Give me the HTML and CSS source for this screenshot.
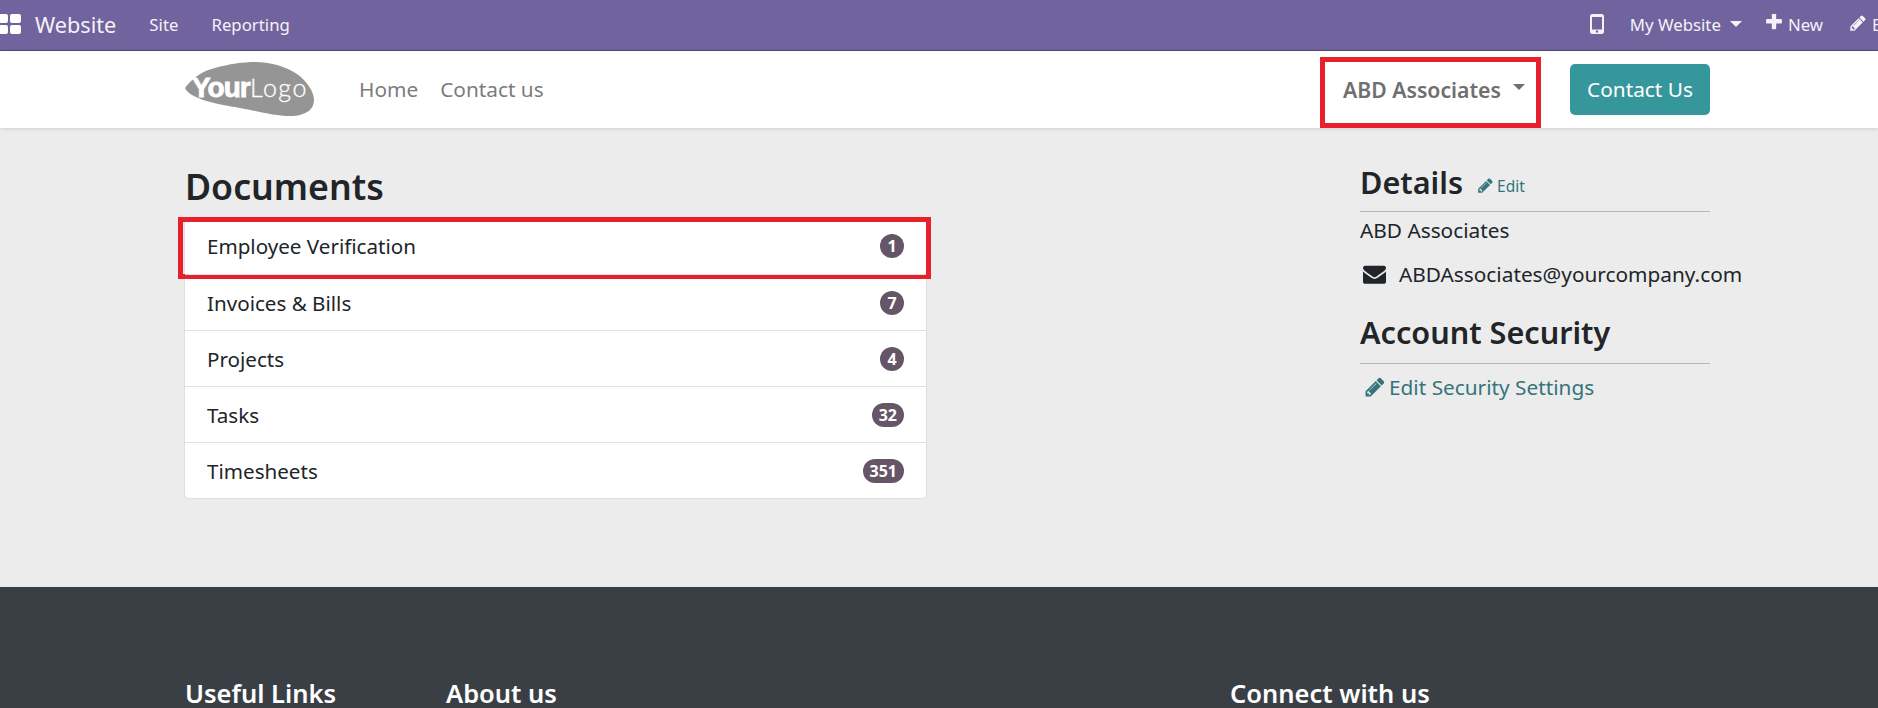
FILE: index.html
```html
<!DOCTYPE html>
<html lang="en">
<head>
    <meta charset="UTF-8">
    <title>Documents</title>
    <link rel="stylesheet" href="styles.css">
</head>
<body>
    <svg class="icon-defs" width="0" height="0">
        <symbol id="pencil" viewBox="0 0 1792 1792"><path d="M491 1536l91-91-235-235-91 91v107h128v128h107zm523-928q0-22-22-22-10 0-17 7l-542 542q-7 7-7 17 0 22 22 22 10 0 17-7l542-542q7-7 7-17zm-54-192l416 416-832 832h-416v-416zm683 96q0 53-37 90l-166 166-416-416 166-165q36-38 90-38 53 0 91 38l235 234q37 39 37 91z"/></symbol>
    </svg>

    <div class="top-bar">
        <div class="top-left">
            <svg class="apps-icon" viewBox="0 0 21 20"><rect x="-3" y="0" width="11" height="9" rx="2"/><rect x="10" y="0" width="11" height="9" rx="2"/><rect x="-3" y="11" width="11" height="9" rx="2"/><rect x="10" y="11" width="11" height="9" rx="2"/></svg>
            <span class="brand">Website</span>
            <a class="top-link" href="#">Site</a>
            <a class="top-link" href="#">Reporting</a>
        </div>
        <div class="top-right">
            <svg class="phone-icon" viewBox="0 0 14 20"><path fill-rule="evenodd" d="M2.5 0h9A2.5 2.5 0 0 1 14 2.5v15a2.5 2.5 0 0 1-2.5 2.5h-9A2.5 2.5 0 0 1 0 17.500v-15A2.500 2.500 0 0 1 2.500 0zM2 3v12.500h10V3zm5 13.300a1.200 1.200 0 1 0 0 2.400 1.200 1.200 0 0 0 0-2.400z"/></svg>
            <a class="top-link" href="#">My Website<span class="caret"></span></a>
            <a class="top-link new-link" href="#"><svg class="plus-icon" viewBox="192 192 1408 1408"><path d="M1600 736v192q0 40-28 68t-68 28h-416v416q0 40-28 68t-68 28h-192q-40 0-68-28t-28-68v-416h-416q-40 0-68-28t-28-68v-192q0-40 28-68t68-28h416v-416q0-40 28-68t68-28h192q40 0 68 28t28 68v416h416q40 0 68 28t28 68z"/></svg>New</a>
            <a class="top-link edit-link" href="#"><svg class="pencil"><use href="#pencil"/></svg>Edit</a>
        </div>
    </div>

    <header class="site-header">
        <svg class="logo" viewBox="0 0 129 55">
            <path d="M0 26C8 15 18 9 30 6C44 2 58 0 70 0C85 0 100 4 112 12C122 19 129 30 129 38C129 47 122 53 108 54C92 55 68 48 50 45C30 42 4 36 0 26Z"/>
            <text class="logo-your" x="7" y="35">Your</text>
            <text class="logo-logo" x="65" y="35">Logo</text>
        </svg>
        <nav class="main-nav">
            <a href="#">Home</a>
            <a href="#">Contact us</a>
        </nav>
        <div class="user-menu">ABD Associates<span class="caret"></span></div>
        <a class="contact-btn" href="#">Contact Us</a>
    </header>

    <main class="content">
        <section class="documents">
            <h1>Documents</h1>
            <ul class="doc-list">
                <li class="marked">Employee Verification <span class="badge">1</span></li>
                <li>Invoices &amp; Bills <span class="badge">7</span></li>
                <li>Projects <span class="badge">4</span></li>
                <li>Tasks <span class="badge">32</span></li>
                <li>Timesheets <span class="badge">351</span></li>
            </ul>
        </section>
        <aside class="details">
            <div class="side-title">
                <h2>Details</h2>
                <a class="small-edit" href="#"><svg class="pencil"><use href="#pencil"/></svg>Edit</a>
            </div>
            <div class="side-name">ABD Associates</div>
            <div class="side-mail">
                <svg class="mail-icon" viewBox="0 128 1792 1536"><path d="M1792 710v794q0 66-47 113t-113 47h-1472q-66 0-113-47t-47-113v-794q44 49 101 87 362 246 497 345 57 42 92.500 65.500t94.500 48 110 24.500h2q51 0 110-24.500t94.500-48 92.500-65.500q170-123 498-345 57-39 100-87zm0-294q0 79-49 151t-122 123q-376 261-468 325-10 7-42.500 30.500t-54 38-52 32.500-57.500 27-50 9h-2q-23 0-50-9t-57.500-27-52-32.500-54-38-42.500-30.500q-91-64-262-182.500t-205-142.500q-62-42-117-115.500t-55-136.500q0-78 41.500-130t118.500-52h1472q65 0 112.500 47t47.500 113z"/></svg>
                <span>ABDAssociates@yourcompany.com</span>
            </div>
            <div class="side-title security">
                <h2>Account Security</h2>
            </div>
            <a class="security-link" href="#"><svg class="pencil"><use href="#pencil"/></svg>Edit Security Settings</a>
        </aside>
    </main>

    <footer class="site-footer">
        <h3 class="col-links">Useful Links</h3>
        <h3 class="col-about">About us</h3>
        <h3>Connect with us</h3>
    </footer>
</body>
</html>
```

FILE: styles.css
```css
html, body {
    height: 708px;
    overflow: hidden;
}
body {
    margin: 0;
    font-family: "Noto Sans", "Open Sans", sans-serif;
    background-color: #ececec;
    color: #212529;
    display: flex;
    flex-direction: column;
}
a {
    color: inherit;
    text-decoration: none;
}
.icon-defs {
    position: absolute;
}
.pencil {
    fill: currentColor;
}

/* top bar */
.top-bar {
    height: 50px;
    flex-shrink: 0;
    background-color: #71639e;
    border-bottom: 1px solid #544a70;
    color: #f4f2f8;
    display: flex;
    align-items: center;
    justify-content: space-between;
}
.top-left {
    display: flex;
    align-items: center;
    padding-bottom: 2px;
}
.apps-icon {
    width: 21px;
    height: 20px;
    fill: #ffffff;
    margin-right: 14px;
}
.brand {
    font-size: 21.700px;
    margin-right: 33px;
}
.top-link {
    font-size: 16.800px;
    display: flex;
    align-items: center;
}
.top-left .top-link {
    margin-right: 33px;
}
.top-right {
    display: flex;
    align-items: center;
    flex-shrink: 0;
    margin-right: -24px;
    padding-bottom: 2px;
}
.phone-icon {
    width: 14px;
    height: 20px;
    fill: #f4f2f8;
    margin-right: 26px;
}
.plus-icon {
    width: 16px;
    height: 16px;
    fill: currentColor;
    margin-right: 6px;
    margin-top: -4px;
}
.new-link {
    margin-left: 24px;
}
.edit-link {
    margin-left: 26px;
}
.edit-link .pencil {
    width: 18px;
    height: 18px;
    margin-right: 5px;
    margin-top: -3px;
}
.caret {
    display: inline-block;
    border-top: 6px solid currentColor;
    border-left: 6px solid transparent;
    border-right: 6px solid transparent;
    margin-left: 9px;
}

/* site header */
.site-header {
    height: 77px;
    flex-shrink: 0;
    background-color: #ffffff;
    box-shadow: 0 1px 4px rgba(0, 0, 0, 0.12);
    display: flex;
    align-items: center;
    padding: 0 168px 0 185px;
    position: relative;
}
.logo {
    width: 129px;
    height: 55px;
    fill: #959595;
}
.logo-your {
    fill: #ffffff;
    font-family: "Liberation Sans", sans-serif;
    font-weight: bold;
    font-size: 28px;
    letter-spacing: -1px;
    stroke: #ffffff;
    stroke-width: 0.800px;
}
.logo-logo {
    fill: #ffffff;
    font-family: "Lato", sans-serif;
    font-weight: 300;
    font-size: 25px;
    letter-spacing: 1.500px;
    stroke: #ffffff;
    stroke-width: 0.300px;
}
.main-nav {
    display: flex;
    gap: 22px;
    margin-left: 45px;
    padding-bottom: 2px;
    font-size: 20.800px;
    color: #7c7c7c;
}
.user-menu {
    margin-left: auto;
    box-sizing: border-box;
    width: 221px;
    height: 71px;
    margin-top: 6px;
    border: 5px solid #e8202c;
    display: flex;
    align-items: center;
    padding: 0 0 7px 18px;
    font-size: 21.200px;
    font-weight: 600;
    color: #6f6f6f;
}
.user-menu .caret {
    margin-left: 12px;
    margin-top: -4px;
}
.contact-btn {
    margin-left: 29px;
    width: 140px;
    height: 51px;
    box-sizing: border-box;
    padding-bottom: 2px;
    background-color: #35979c;
    color: #ffffff;
    border-radius: 5px;
    font-size: 20.800px;
    display: flex;
    align-items: center;
    justify-content: center;
}

/* main */
.content {
    height: 459px;
    flex-shrink: 0;
    display: flex;
    justify-content: space-between;
    padding: 0 168px 0 185px;
}
.documents {
    width: 741px;
}
h1 {
    font-size: 35.700px;
    font-weight: 600;
    line-height: 48px;
    margin: 34px 0 8px;
}
.doc-list {
    list-style: none;
    margin: 0;
    padding: 0;
    background-color: #ffffff;
    border-radius: 4px;
    box-shadow: 0 0 2px rgba(0, 0, 0, 0.2);
}
.doc-list li {
    height: 56px;
    box-sizing: border-box;
    display: flex;
    align-items: center;
    justify-content: space-between;
    padding: 0 22px;
    font-size: 20.600px;
    border-top: 1px solid #dfdfdf;
    position: relative;
}
.doc-list li:first-child {
    border-top: none;
}
/* red annotation box */
.doc-list li.marked::after {
    content: "";
    position: absolute;
    top: -1px;
    left: -7px;
    right: -5px;
    bottom: -5px;
    border: 5px solid #e8202c;
}
.badge {
    min-width: 24px;
    height: 24px;
    box-sizing: border-box;
    padding: 0 7px;
    border-radius: 12px;
    background-color: #665566;
    color: #ffffff;
    font-size: 16px;
    font-weight: 700;
    display: flex;
    align-items: center;
    justify-content: center;
}

/* details column */
.details {
    width: 350px;
    padding-top: 26px;
    font-size: 20.800px;
}
.side-title {
    display: flex;
    align-items: baseline;
    gap: 14px;
    border-bottom: 1px solid #b5b5b5;
    height: 58px;
    box-sizing: border-box;
}
.side-title h2 {
    font-size: 30.600px;
    font-weight: 600;
    line-height: 56px;
    margin: 0;
}
.small-edit {
    font-size: 15.500px;
    color: #35747a;
    display: flex;
    align-items: center;
}
.small-edit .pencil {
    width: 17px;
    height: 17px;
    margin-right: 3px;
}
.side-name {
    margin-top: 4px;
    line-height: 28px;
}
.side-mail {
    display: flex;
    align-items: center;
    white-space: nowrap;
    margin-top: 16px;
    line-height: 28px;
}
.mail-icon {
    width: 23px;
    height: 20px;
    flex-shrink: 0;
    fill: #212529;
    margin: 0 13px 0 3px;
}
.security {
    margin-top: 16px;
    height: 60px;
}
.security-link {
    margin-top: 9px;
    color: #35747a;
    display: flex;
    align-items: center;
    line-height: 28px;
}
.security-link .pencil {
    width: 22px;
    height: 22px;
    margin: 0 3px 0 4px;
}

/* footer */
.site-footer {
    flex: 1;
    background-color: #3a3f46;
    color: #ffffff;
    display: flex;
    padding: 86px 0 0 185px;
}
.site-footer h3 {
    font-size: 25.500px;
    font-weight: 600;
    line-height: 40px;
    margin: 0;
}
.col-links {
    width: 261px;
}
.col-about {
    width: 784px;
}
```
